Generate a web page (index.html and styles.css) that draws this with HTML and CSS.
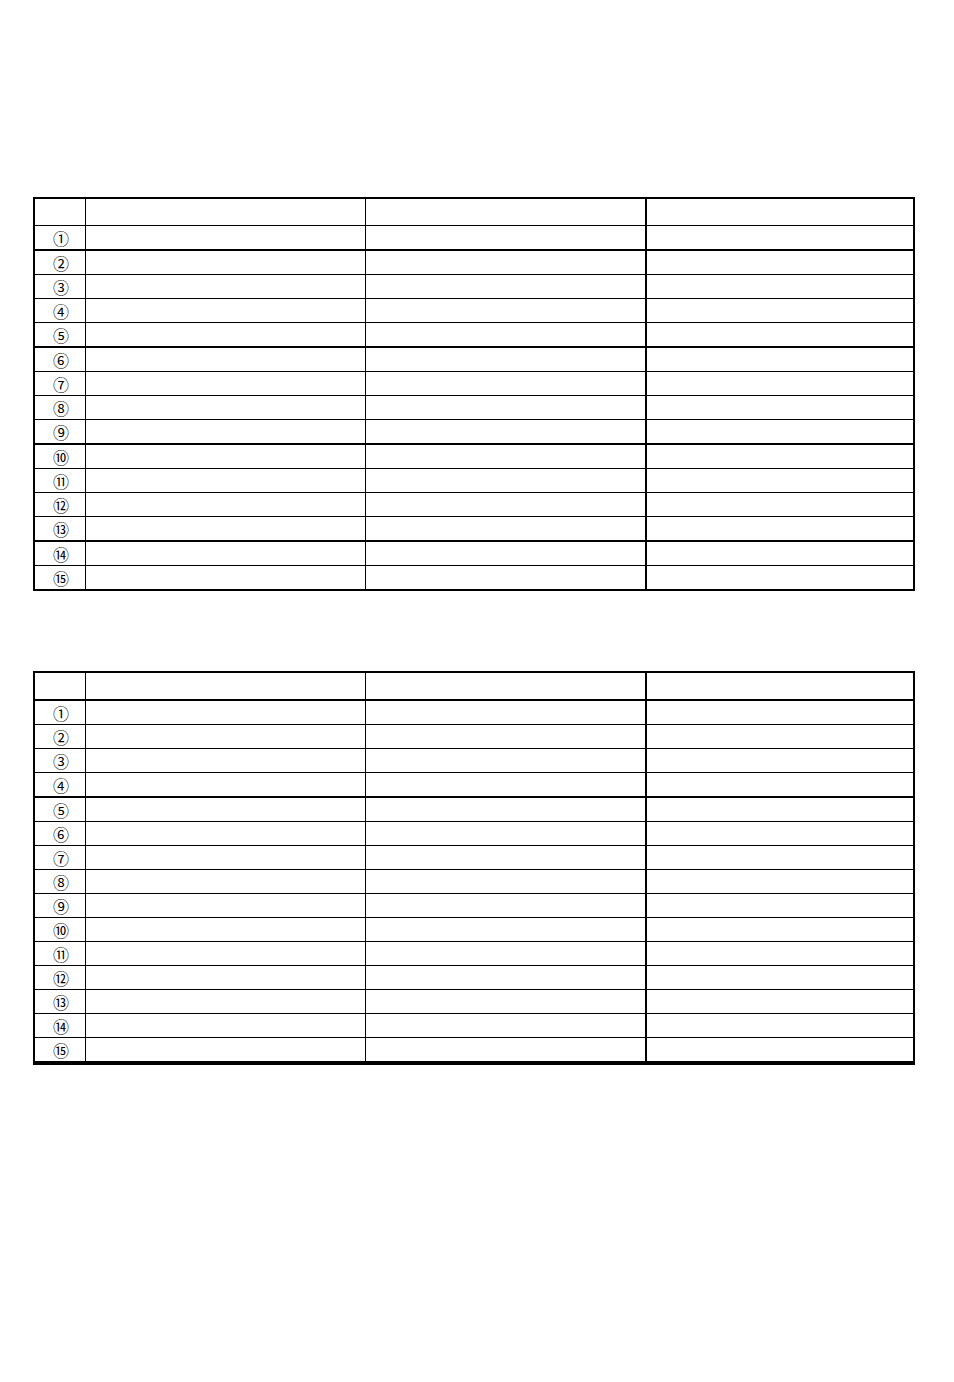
FILE: index.html
```html
<!DOCTYPE html>
<html lang="ja">
<head>
<meta charset="utf-8">
<title>表</title>
<link rel="stylesheet" href="styles.css">
</head>
<body>
<main class="page">
  <table class="grid grid-a">
    <tbody>
      <tr class="head"><td></td><td></td><td></td><td></td></tr>
      <tr class="thick"><td>①</td><td></td><td></td><td></td></tr>
      <tr><td>②</td><td></td><td></td><td></td></tr>
      <tr><td>③</td><td></td><td></td><td></td></tr>
      <tr><td>④</td><td></td><td></td><td></td></tr>
      <tr class="thick"><td>⑤</td><td></td><td></td><td></td></tr>
      <tr><td>⑥</td><td></td><td></td><td></td></tr>
      <tr><td>⑦</td><td></td><td></td><td></td></tr>
      <tr><td>⑧</td><td></td><td></td><td></td></tr>
      <tr class="thick"><td>⑨</td><td></td><td></td><td></td></tr>
      <tr><td>⑩</td><td></td><td></td><td></td></tr>
      <tr><td>⑪</td><td></td><td></td><td></td></tr>
      <tr><td>⑫</td><td></td><td></td><td></td></tr>
      <tr class="thick"><td>⑬</td><td></td><td></td><td></td></tr>
      <tr><td>⑭</td><td></td><td></td><td></td></tr>
      <tr class="thick"><td>⑮</td><td></td><td></td><td></td></tr>
    </tbody>
  </table>

  <table class="grid grid-b">
    <tbody>
      <tr class="head thick"><td></td><td></td><td></td><td></td></tr>
      <tr><td>①</td><td></td><td></td><td></td></tr>
      <tr><td>②</td><td></td><td></td><td></td></tr>
      <tr><td>③</td><td></td><td></td><td></td></tr>
      <tr class="thick"><td>④</td><td></td><td></td><td></td></tr>
      <tr><td>⑤</td><td></td><td></td><td></td></tr>
      <tr><td>⑥</td><td></td><td></td><td></td></tr>
      <tr><td>⑦</td><td></td><td></td><td></td></tr>
      <tr><td>⑧</td><td></td><td></td><td></td></tr>
      <tr><td>⑨</td><td></td><td></td><td></td></tr>
      <tr><td>⑩</td><td></td><td></td><td></td></tr>
      <tr><td>⑪</td><td></td><td></td><td></td></tr>
      <tr><td>⑫</td><td></td><td></td><td></td></tr>
      <tr><td>⑬</td><td></td><td></td><td></td></tr>
      <tr><td>⑭</td><td></td><td></td><td></td></tr>
      <tr class="last"><td>⑮</td><td></td><td></td><td></td></tr>
    </tbody>
  </table>
</main>
</body>
</html>
```

FILE: styles.css
```css
html, body {
  margin: 0;
  padding: 0;
  background: #ffffff;
}

.page {
  padding: 197px 0 0 33px;
  font-family: "Noto Sans CJK JP", "DejaVu Sans", sans-serif;
  color: #000;
}

.grid {
  border-collapse: separate;
  border-spacing: 0;
  table-layout: fixed;
  border-top: 2px solid #000;
  border-left: 2px solid #000;
}

.grid-b {
  margin-top: 80px;
}

.grid td {
  padding: 0;
  height: 23px;
  border-right: 1px solid #000;
  border-bottom: 1px solid #000;
  text-align: center;
  vertical-align: middle;
  font-size: 16px;
  line-height: 16px;
}

.grid td:nth-child(1) { width: 48px; padding-left: 2px; }
.grid td:nth-child(2) { width: 279px; }
.grid td:nth-child(3) { width: 279px; border-right-width: 2px; }
.grid td:nth-child(4) { width: 266px; border-right-width: 2px; }

.grid tr.head td { height: 26px; }

.grid tr.thick td { border-bottom-width: 2px; }

.grid tr.last td {
  height: 23px;
  border-bottom-width: 4px;
}
```
